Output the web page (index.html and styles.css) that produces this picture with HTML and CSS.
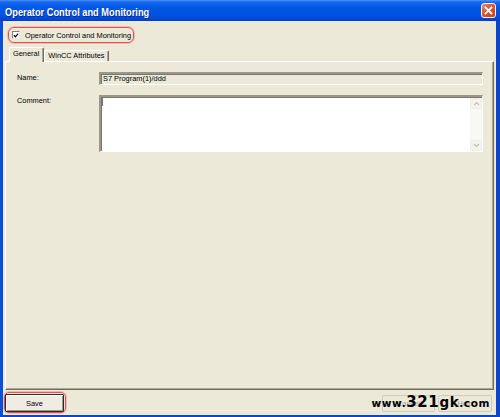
FILE: index.html
```html
<!DOCTYPE html>
<html>
<head>
<meta charset="utf-8">
<link rel="stylesheet" href="styles.css">
</head>
<body>
<div class="window">
  <div class="titlebar">
    <span class="title">Operator Control and Monitoring</span>
    <span class="close">
      <svg width="13" height="13" viewBox="0 0 13 13"><path d="M3.5 3.5L9.5 9.5M9.5 3.5L3.5 9.5" stroke="#fff" stroke-width="1.8" stroke-linecap="square"/></svg>
    </span>
  </div>
  <div class="client">
    <div class="check-row">
      <span class="hl hl-check">
        <span class="cb"><svg width="7" height="7" viewBox="0 0 7 7"><path d="M1 3.2L2.8 5L6 1.3" fill="none" stroke="#000" stroke-width="1.4"/></svg></span>
        <span class="cb-label">Operator Control and Monitoring</span>
      </span>
    </div>
    <div class="tabs">
      <div class="tab active">General</div>
      <div class="tab">WinCC Attributes</div>
    </div>
    <div class="panel">
      <div class="row">
        <span class="lbl">Name:</span>
        <div class="field disabled">S7 Program(1)/ddd</div>
      </div>
      <div class="row">
        <span class="lbl">Comment:</span>
        <div class="field memo">
          <span class="caret"></span>
          <div class="vscroll">
            <span class="sbtn"><svg width="7" height="5" viewBox="0 0 7 5"><path d="M1 4L3.5 1.5L6 4" fill="none" stroke="#c2c0b6" stroke-width="1.2"/></svg></span>
            <span class="sbtn"><svg width="7" height="5" viewBox="0 0 7 5"><path d="M1 1L3.5 3.5L6 1" fill="none" stroke="#c2c0b6" stroke-width="1.2"/></svg></span>
          </div>
        </div>
      </div>
    </div>
    <div class="footer">
      <span class="hl hl-save"><span class="btn default">Save</span></span>
      <div class="right-btns">
        <span class="btn off w-cancel">Cancel</span>
        <span class="btn off w-help">Help</span>
      </div>
      <span class="watermark"><span class="wm-s">www.</span><span class="wm-l">321</span><span class="wm-m">gk</span><span class="wm-s">.com</span></span>
    </div>
  </div>
</div>
</body>
</html>
```

FILE: styles.css
```css
* { box-sizing: border-box; }
html, body { margin: 0; padding: 0; }
body {
  width: 500px;
  height: 417px;
  overflow: hidden;
  background: #0a4fd8;
  font-family: "Liberation Sans", Arial, sans-serif;
  font-size: 7.4px;
  color: #000;
}
.window {
  width: 500px;
  height: 417px;
  display: flex;
  flex-direction: column;
}
.titlebar {
  height: 21px;
  flex: none;
  display: flex;
  align-items: center;
  justify-content: space-between;
  padding: 2px 4px 0 5px;
  background: linear-gradient(#4a95f7 0%, #1667ee 10%, #0258e6 35%, #0053e1 70%, #0348d6 90%, #003bc0 100%);
}
.title {
  color: #fff;
  font-family: "Liberation Sans", Arial, sans-serif;
  font-weight: bold;
  font-size: 11.6px;
  display: inline-block;
  transform: scaleX(0.8);
  transform-origin: left center;
  white-space: nowrap;
  text-shadow: 1px 1px 0 #0b2a8a;
}
.close {
  width: 15px;
  height: 15px;
  margin-top: -2px;
  border: 1px solid #f4f4f4;
  border-radius: 3px;
  background: linear-gradient(135deg, #ef8a6a 0%, #e0532e 45%, #c8401c 100%);
  display: flex;
  align-items: center;
  justify-content: center;
}
.close svg { display: block; }
.client {
  flex: 1;
  background: #ece9d8;
  border-left: 3px solid #0a4fd8;
  border-right: 4px solid #0a45cf;
  border-bottom: 2px solid #0a45cf;
  display: flex;
  flex-direction: column;
  padding-top: 6px;
  position: relative;
}
.check-row {
  height: 16px;
  display: flex;
  padding-left: 5px;
}
.hl {
  border: 1px solid #e35050;
  border-radius: 6px;
  box-shadow: 0 0 0 1px rgba(245, 150, 150, 0.55);
}
.hl-check {
  width: 126px;
  height: 16px;
  display: flex;
  align-items: center;
  padding-left: 3px;
}
.cb {
  width: 8px;
  height: 8px;
  background: #fff;
  border-top: 1px solid #808080;
  border-left: 1px solid #808080;
  border-right: 1px solid #e8e8e0;
  border-bottom: 1px solid #e8e8e0;
  display: flex;
  align-items: center;
  justify-content: center;
  margin-right: 5px;
}
.cb svg { display: block; }
.tabs {
  margin-top: 4px;
  height: 14px;
  display: flex;
  align-items: flex-end;
  padding-left: 6px;
  position: relative;
  z-index: 1;
}
.tab {
  height: 11px;
  padding: 0 3px;
  line-height: 10px;
  border-top: 1px solid #fff;
  border-left: 1px solid #fff;
  border-right: 1px solid #716f64;
  border-radius: 2px 2px 0 0;
  box-shadow: inset -1px 0 0 #aca899;
  background: #ece9d8;
  white-space: nowrap;
}
.tab.active {
  height: 15px;
  margin-bottom: -1px;
  padding: 0 4px 0 3px;
  line-height: 12px;
}
.panel {
  flex: 1;
  margin: 0 2px 0 2px;
  border-top: 1px solid #fff;
  border-left: 1px solid #fff;
  border-right: 1px solid #716f64;
  border-bottom: 1px solid #716f64;
  box-shadow: inset -1px -1px 0 #aca899;
  padding: 10px 10px 0 11px;
  display: flex;
  flex-direction: column;
  gap: 10px;
}
.row {
  display: flex;
  align-items: flex-start;
}
.lbl {
  width: 82px;
  flex: none;
  line-height: 9px;
  padding-top: 1px;
}
.field {
  flex: 1;
  border-top: 2px solid #9a978b;
  border-left: 2px solid #9a978b;
  border-right: 1px solid #fff;
  border-bottom: 1px solid #fff;
  box-shadow: inset 1px 1px 0 #7a776c;
}
.field.disabled {
  height: 13px;
  line-height: 10px;
  padding-left: 2px;
  background: #ece9d8;
}
.field.memo {
  height: 57px;
  background: #fff;
  position: relative;
  display: flex;
  justify-content: space-between;
}
.caret {
  width: 1px;
  height: 8px;
  background: #777;
  margin: 1px 0 0 1px;
}
.vscroll {
  width: 12px;
  background: #f8f8f5;
  display: flex;
  flex-direction: column;
  justify-content: space-between;
  margin-top: 1px;
}
.sbtn {
  height: 11px;
  border: 1px solid #eeede6;
  border-radius: 2px;
  background: #f4f3ee;
  display: flex;
  align-items: center;
  justify-content: center;
}
.sbtn svg { display: block; }
.footer {
  height: 25px;
  flex: none;
  display: flex;
  justify-content: space-between;
  align-items: flex-start;
  padding: 2px 4px 0 1px;
  position: relative;
}
.hl-save {
  width: 62px;
  height: 21px;
  padding: 1px 1px 0 0;
  border-radius: 5px;
  display: flex;
}
.btn {
  display: flex;
  align-items: center;
  justify-content: center;
  background: #efede3;
}
.btn.default {
  width: 59px;
  height: 18px;
  border: 1px solid #2a2a2a;
  box-shadow: inset 1px 1px 0 #fff, inset -1px -1px 0 #9d9a8c;
  border-radius: 1px;
}
.right-btns {
  display: flex;
  gap: 3px;
  padding-top: 3px;
}
.btn.off {
  height: 17px;
  border: 1px solid #cfccbe;
  color: #a7a597;
  border-radius: 2px;
  background: #ece9d8;
}
.w-cancel { width: 53px; }
.w-help { width: 54px; }
.watermark {
  position: absolute;
  right: 6px;
  top: 3px;
  font-family: "DejaVu Sans", sans-serif;
  font-weight: bold;
  color: #000;
  white-space: nowrap;
  line-height: 18px;
  letter-spacing: 0.6px;
}
.wm-s { font-size: 10.5px; }
.wm-l { font-size: 15px; }
.wm-m { font-size: 13.5px; }
```
